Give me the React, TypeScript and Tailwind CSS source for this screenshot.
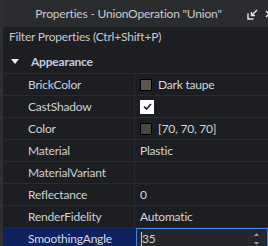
import React from "react";

type Row = {
  name: string;
  value?: React.ReactNode;
};

function Swatch({ color }: { color: string }) {
  return (
    <span
      className="inline-block h-[12px] w-[12px] border border-black"
      style={{ backgroundColor: color }}
    />
  );
}

function Check() {
  return (
    <span className="flex h-[14px] w-[14px] items-center justify-center bg-white">
      <svg width="9" height="7" viewBox="0 0 9 7">
        <path d="M1 3.5 L3.5 6 L8 1" fill="none" stroke="#1a1a1a" strokeWidth="1.6" />
      </svg>
    </span>
  );
}

const rows: Row[] = [
  {
    name: "BrickColor",
    value: (
      <span className="flex items-center gap-[6px]">
        <Swatch color="#5f5550" />
        Dark taupe
      </span>
    ),
  },
  { name: "CastShadow", value: <Check /> },
  {
    name: "Color",
    value: (
      <span className="flex items-center gap-[6px]">
        <Swatch color="#464646" />
        [70, 70, 70]
      </span>
    ),
  },
  { name: "Material", value: "Plastic" },
  { name: "MaterialVariant" },
  { name: "Reflectance", value: "0" },
  { name: "RenderFidelity", value: "Automatic" },
];

export default function App() {
  return (
    <div
      className="flex h-[246px] w-[268px] overflow-hidden bg-[#2b2c30] text-[12px] tracking-[-0.2px] text-[#cfd1d6]"
      style={{ fontFamily: "Lato, 'Noto Sans', sans-serif" }}
    >
      <div className="w-[3px] shrink-0 bg-[#2e2f33]" />
      <div className="flex min-w-0 flex-1 flex-col">
        {/* title bar */}
        <div className="relative flex h-[27px] shrink-0 items-center justify-center bg-[#2b2c30] pr-[14px] text-[#c8cad0]">
          <span>Properties - UnionOperation "Union"</span>
          <svg className="absolute left-[244px] top-[9px]" width="11" height="11" viewBox="0 0 11 11">
            <path d="M1 4.5 V10 H6.5" fill="none" stroke="#e6e6e6" strokeWidth="1.4" />
            <path d="M10 1 L4.5 6.5 M4.5 3 V6.5 H8" fill="none" stroke="#e6e6e6" strokeWidth="1.4" />
          </svg>
          <svg className="absolute left-[262px] top-[10px]" width="8" height="8" viewBox="0 0 8 8">
            <path d="M1 1 L7 7 M7 1 L1 7" stroke="#e6e6e6" strokeWidth="1.4" />
          </svg>
        </div>

        {/* filter */}
        <div className="flex h-[19px] shrink-0 items-center bg-[#1e1f23] pl-[6px] text-[#c6c8ce]">
          Filter Properties (Ctrl+Shift+P)
        </div>

        <div className="flex flex-1 flex-col bg-[#1d1e22]">
          {/* category header */}
          <div className="flex h-[28px] shrink-0 items-center border-b border-[#2a2b30] pt-[4px]">
            <svg className="ml-[8px] mr-[12px]" width="8" height="5" viewBox="0 0 8 5">
              <path d="M0 0 H8 L4 5 Z" fill="#f0f0f0" />
            </svg>
            <span className="font-bold text-[#c5cbe0]">Appearance</span>
          </div>

          {rows.map((r) => (
            <div
              key={r.name}
              className="flex h-[22px] shrink-0 border-b border-[#2a2b30]"
            >
              <div className="flex w-[132px] shrink-0 items-center border-r border-[#2a2b30] pl-[25px]">
                {r.name}
              </div>
              <div className="flex flex-1 items-center pl-[5px] text-[#d4d6da]">
                {r.value}
              </div>
            </div>
          ))}

          {/* editing row */}
          <div className="flex h-[22px] shrink-0">
            <div className="flex w-[133px] shrink-0 items-center bg-[#0e2260] pl-[25px] text-[#d6dae6]">
              SmoothingAngle
            </div>
            <div className="relative flex flex-1 items-center border border-[#3f86f2] bg-[#26272c] pl-[4px]">
              <span className="h-[15px] w-[1px] bg-[#f0d060]" />
              <span>35</span>
              <svg className="absolute right-[8px] top-[3px]" width="5" height="14" viewBox="0 0 5 14">
                <path d="M0 4 H5 L2.5 1 Z" fill="#9a9ca2" />
                <path d="M0 10 H5 L2.5 13 Z" fill="#9a9ca2" />
              </svg>
            </div>
          </div>
        </div>
      </div>
    </div>
  );
}
